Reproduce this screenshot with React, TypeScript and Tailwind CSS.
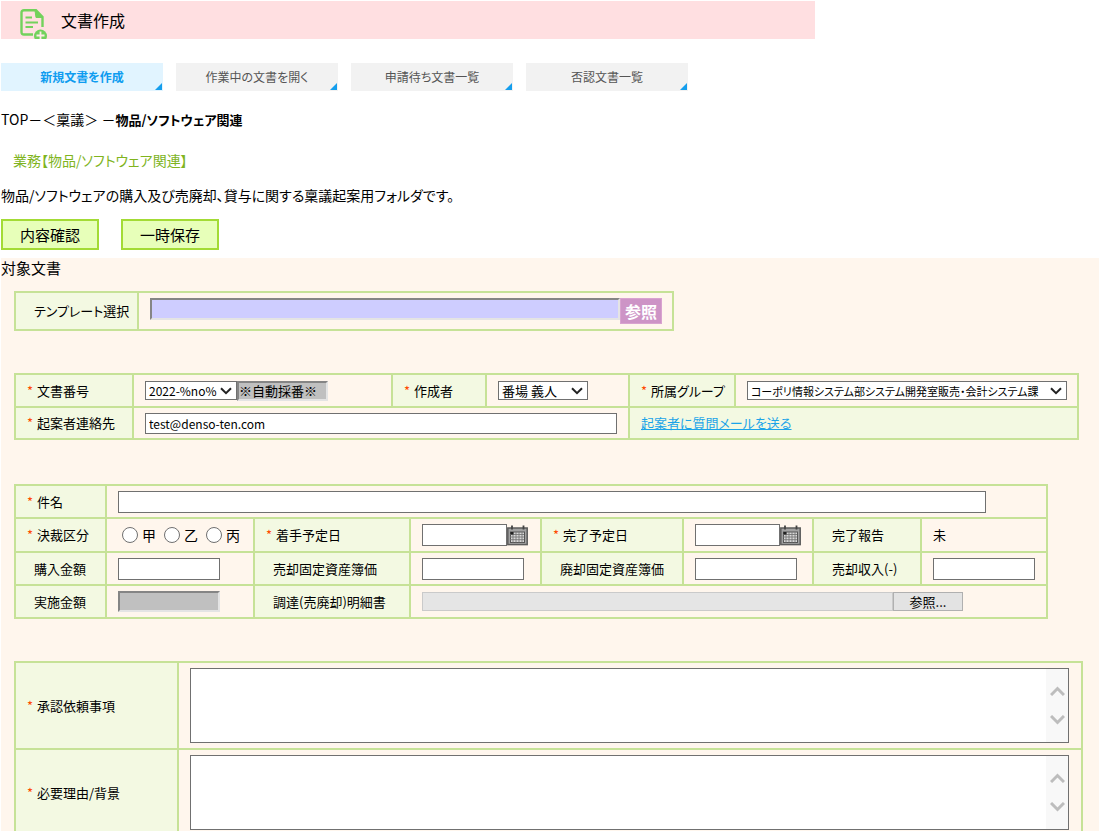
import React from 'react';
import clsx from 'clsx';

const tabs = [
    { label: '新規文書を作成', active: true },
    { label: '作業中の文書を開く', active: false },
    { label: '申請待ち文書一覧', active: false },
    { label: '否認文書一覧', active: false },
];

const cell = 'border-2 border-[#c6e297] pl-[11px] text-left align-middle font-normal';
const box = 'border border-[#707070] bg-white px-[3px] text-[12px] outline-none';
const sunken = 'border-2 border-t-[#858585] border-r-[#e4e4e4] border-b-[#e4e4e4] border-l-[#858585] outline-none';

interface HeadProps {
    children: React.ReactNode;
    htmlFor?: string;
    required?: boolean;
}

function Head({ children, htmlFor, required }: HeadProps) {
    return (
        <th scope="row" className="border-2 border-[#c6e297] bg-[#f3f9e2] text-left align-middle text-[13px] font-normal whitespace-nowrap">
            {required ? (
                <span className="flex items-center pl-[11px]">
                    <span className="w-[10px] text-[#ff4a00]">*</span>
                    <label htmlFor={htmlFor}>{children}</label>
                </span>
            ) : (
                <label htmlFor={htmlFor} className="block pl-[18px]">{children}</label>
            )}
        </th>
    );
}

function Select({ id, option, className }: { id: string; option: string; className: string }) {
    return (
        <span className={clsx('relative block', className)}>
            <select id={id} className="block h-[19px] w-full appearance-none border border-[#707070] bg-white pl-[3px] leading-4 outline-none">
                <option>{option}</option>
            </select>
            <svg className="pointer-events-none absolute top-[6px] right-[5px]" width="12" height="8" viewBox="0 0 12 8" fill="none" stroke="#222" strokeWidth="2">
                <path d="M1 1.2l5 5 5-5" />
            </svg>
        </span>
    );
}

function CalendarIcon() {
    return (
        <svg width="21" height="21" viewBox="0 0 21 21" fill="none">
            <rect x="0.8" y="3" width="19.4" height="16.6" fill="#a2a2a2" stroke="#5c5c5c" strokeWidth="1.5" />
            <rect x="3.500" y="7" width="14" height="10.5" fill="#d9d9d9" stroke="#555" />
            <path d="M3 9.5h14M3 12h14M3 14.7h14M6 7v10.500M9 7v10.500M12 7v10.500M15 7v10.500" stroke="#777" strokeWidth="0.9" />
            <rect x="3.500" y="7" width="3" height="2.500" fill="#222" />
            <path d="M5 0.500v4M16.500 0.500v4" stroke="#444" strokeWidth="1.800" />
        </svg>
    );
}

function DateField({ id }: { id: string }) {
    return (
        <div className="flex items-center">
            <input id={id} type="text" className={clsx(box, 'h-[22px] w-[85px]')} />
            <button type="button" aria-label="カレンダー">
                <CalendarIcon />
            </button>
        </div>
    );
}

function TextArea({ id }: { id: string }) {
    return (
        <div className="relative mr-3">
            <textarea id={id} className={clsx(box, 'block h-[75px] w-full resize-none')} />
            <div className="absolute top-px right-px bottom-px flex w-[22px] flex-col items-center justify-center gap-[19px] bg-[#f8f8f8]">
                <svg width="15" height="10" viewBox="0 0 15 10" fill="none" stroke="#bdbdbd" strokeWidth="3">
                    <path d="M1 9l6.500-6.500 6.500 6.500" />
                </svg>
                <svg width="15" height="10" viewBox="0 0 15 10" fill="none" stroke="#bdbdbd" strokeWidth="3">
                    <path d="M1 1l6.500 6.500 6.500-6.500" />
                </svg>
            </div>
        </div>
    );
}

export default function App() {
    return (
        <div className="min-h-screen bg-white px-px pt-px font-['Noto_Sans_CJK_JP',sans-serif] text-[14px] leading-5 text-black [font-feature-settings:'palt']">
            <header className="flex h-[38px] max-w-[814px] items-center overflow-hidden bg-[#ffdfe1]">
                <svg className="mt-[8px] ml-[19px] shrink-0" width="28" height="30" viewBox="0 0 28 30" fill="none" stroke="#72d25c" strokeWidth="2.400">
                    <path d="M13 25.500H4Q1.500 25.500 1.500 23V3.500Q1.500 1.200 4 1.200H16L22.500 8V18" />
                    <path d="M15 1.500L16 8.500H22.500L15.500 1.500Z" fill="#72d25c" strokeWidth="1" />
                    <path d="M5.500 8.500H12M5.500 13.500H18M5.500 18H13" strokeWidth="2" />
                    <circle cx="20.500" cy="27" r="6.500" fill="#72d25c" stroke="none" />
                    <path d="M16.500 26.500H24.500M20.500 22.500V30" stroke="#ffe9e6" strokeWidth="1.800" />
                </svg>
                <h1 className="ml-[13px] text-[16px]">文書作成</h1>
            </header>

            <nav className="mt-6 flex gap-[13px]">
                {tabs.map(tab => (
                    <a
                        key={tab.label}
                        href="#"
                        className={clsx(
                            'relative flex h-7 w-[162px] items-center justify-center text-[12px]',
                            tab.active ? 'bg-[#e1f4ff] font-bold text-[#0e9cf0]' : 'bg-[#f2f2f2] text-[#555]'
                        )}
                    >
                        {tab.label}
                        <svg className="absolute right-px bottom-px" width="7" height="7" viewBox="0 0 7 7">
                            <path d="M7 0v7H0z" fill="#159eed" />
                        </svg>
                    </a>
                ))}
            </nav>

            <p className="mt-[18px]">
                TOP－＜稟議＞ －<b className="text-[13px]">物品/ソフトウェア関連</b>
            </p>
            <h2 className="mt-[18px] pl-3 leading-6 text-[#80b41e]">業務【物品/ソフトウェア関連】</h2>
            <p className="mt-[13px]">物品/ソフトウェアの購入及び売廃却、貸与に関する稟議起案用フォルダです。</p>

            <div className="mt-[14px] flex gap-[22px] text-[15px]">
                <button type="button" className="h-[31px] w-[98px] border-2 border-[#a3db35] bg-[#e7ffb9] leading-5">内容確認</button>
                <button type="button" className="h-[31px] w-[98px] border-2 border-[#a3db35] bg-[#e7ffb9] leading-5">一時保存</button>
            </div>

            <main className="mt-2 bg-[#fff6ed]">
                <h3 className="text-[15px]">対象文書</h3>

                <div className="pt-[13px] pl-[13px]">
                    <table className="w-[660px] table-fixed border-collapse">
                        <colgroup>
                            <col className="w-[123px]" />
                            <col />
                        </colgroup>
                        <tbody>
                            <tr className="h-[38px]">
                                <Head htmlFor="template">テンプレート選択</Head>
                                <td className={cell}>
                                    <div className="flex items-start">
                                        <input id="template" type="text" readOnly className={clsx(sunken, 'h-[22px] w-[470px] bg-[#cecdff]')} />
                                        <button type="button" className="h-[26px] w-[42px] border border-[#d9a3d0] bg-[#cd94c6] text-[16px] font-bold text-white">参照</button>
                                    </div>
                                </td>
                            </tr>
                        </tbody>
                    </table>
                </div>

                <div className="pt-[42px] pr-5 pl-[13px]">
                    <table className="w-full table-fixed border-collapse">
                        <colgroup>
                            <col className="w-[118px]" />
                            <col className="w-[259px]" />
                            <col className="w-[94px]" />
                            <col className="w-[143px]" />
                            <col className="w-[106px]" />
                            <col />
                        </colgroup>
                        <tbody>
                            <tr className="h-[33px]">
                                <Head htmlFor="docno" required>文書番号</Head>
                                <td className={cell}>
                                    <div className="flex items-center">
                                        <Select id="docno" option="2022-%no%" className="w-[92px] text-[12px]" />
                                        <input
                                            type="text"
                                            readOnly
                                            aria-label="自動採番"
                                            defaultValue="※自動採番※"
                                            className={clsx(sunken, 'h-5 w-[91px] bg-[#c0c0c0] text-[13px] leading-4')}
                                        />
                                    </div>
                                </td>
                                <Head htmlFor="author" required>作成者</Head>
                                <td className={cell}>
                                    <Select id="author" option="番場 義人" className="w-[90px] text-[13px]" />
                                </td>
                                <Head htmlFor="group" required>所属グループ</Head>
                                <td className={cell}>
                                    <Select
                                        id="group"
                                        option="コーポリ情報システム部システム開発室販売・会計システム課"
                                        className="w-[320px] text-[11px]"
                                    />
                                </td>
                            </tr>
                            <tr className="h-8">
                                <Head htmlFor="contact" required>起案者連絡先</Head>
                                <td colSpan={3} className={cell}>
                                    <input id="contact" type="text" defaultValue="test@denso-ten.com" className={clsx(box, 'block h-[21px] w-[472px]')} />
                                </td>
                                <td colSpan={2} className={clsx(cell, 'bg-[#f3f9e2] text-[13px]')}>
                                    <a href="#" className="text-[#1ba4e8] underline">起案者に質問メールを送る</a>
                                </td>
                            </tr>
                        </tbody>
                    </table>
                </div>

                <div className="pt-11 pr-[51px] pl-[13px]">
                    <table className="w-full table-fixed border-collapse">
                        <colgroup>
                            <col className="w-[91px]" />
                            <col className="w-[148px]" />
                            <col className="w-[156px]" />
                            <col className="w-[131px]" />
                            <col className="w-[142px]" />
                            <col className="w-[130px]" />
                            <col className="w-[108px]" />
                            <col />
                        </colgroup>
                        <tbody>
                            <tr className="h-[33px]">
                                <Head htmlFor="subject" required>件名</Head>
                                <td colSpan={7} className={cell}>
                                    <input id="subject" type="text" className={clsx(box, 'block h-[22px] w-[868px]')} />
                                </td>
                            </tr>
                            <tr className="h-[34px]">
                                <Head required>決裁区分</Head>
                                <td className={cell}>
                                    <div className="flex gap-2 pl-1 text-[14px]">
                                        {['甲', '乙', '丙'].map(kind => (
                                            <label key={kind} className="flex items-center gap-1">
                                                <input
                                                    type="radio"
                                                    name="kind"
                                                    className="size-4 appearance-none rounded-full border border-[#707070] bg-white"
                                                />
                                                {kind}
                                            </label>
                                        ))}
                                    </div>
                                </td>
                                <Head htmlFor="start" required>着手予定日</Head>
                                <td className={cell}>
                                    <DateField id="start" />
                                </td>
                                <Head htmlFor="end" required>完了予定日</Head>
                                <td className={cell}>
                                    <DateField id="end" />
                                </td>
                                <Head>完了報告</Head>
                                <td className={clsx(cell, 'text-[13px]')}>未</td>
                            </tr>
                            <tr className="h-[33px]">
                                <Head htmlFor="purchase">購入金額</Head>
                                <td className={cell}>
                                    <input id="purchase" type="text" className={clsx(box, 'block h-[22px] w-[102px]')} />
                                </td>
                                <Head htmlFor="sold">売却固定資産簿価</Head>
                                <td className={cell}>
                                    <input id="sold" type="text" className={clsx(box, 'block h-[22px] w-[102px]')} />
                                </td>
                                <Head htmlFor="scrapped">廃却固定資産簿価</Head>
                                <td className={cell}>
                                    <input id="scrapped" type="text" className={clsx(box, 'block h-[22px] w-[102px]')} />
                                </td>
                                <Head htmlFor="income">売却収入(-)</Head>
                                <td className={cell}>
                                    <input id="income" type="text" className={clsx(box, 'block h-[22px] w-[102px]')} />
                                </td>
                            </tr>
                            <tr className="h-[33px]">
                                <Head htmlFor="actual">実施金額</Head>
                                <td className={cell}>
                                    <input id="actual" type="text" readOnly className={clsx(sunken, 'block h-[21px] w-[102px] bg-[#c0c0c0]')} />
                                </td>
                                <Head htmlFor="detail">調達(売廃却)明細書</Head>
                                <td colSpan={5} className={cell}>
                                    <div className="flex">
                                        <input id="detail" type="text" readOnly className="h-[19px] w-[471px] border border-[#cacaca] bg-[#e5e5e5] outline-none" />
                                        <button type="button" className="h-[19px] w-[70px] border border-[#b0b0b0] bg-[#e3e3e3] text-[13px] leading-4">参照...</button>
                                    </div>
                                </td>
                            </tr>
                        </tbody>
                    </table>
                </div>

                <div className="pt-[42px] pr-4 pl-[13px]">
                    <table className="w-full table-fixed border-collapse">
                        <colgroup>
                            <col className="w-[163px]" />
                            <col />
                        </colgroup>
                        <tbody>
                            <tr className="h-[87px]">
                                <Head htmlFor="request" required>承認依頼事項</Head>
                                <td className={cell}>
                                    <TextArea id="request" />
                                </td>
                            </tr>
                            <tr className="h-[87px]">
                                <Head htmlFor="reason" required>必要理由/背景</Head>
                                <td className={cell}>
                                    <TextArea id="reason" />
                                </td>
                            </tr>
                        </tbody>
                    </table>
                </div>
            </main>
        </div>
    );
}
